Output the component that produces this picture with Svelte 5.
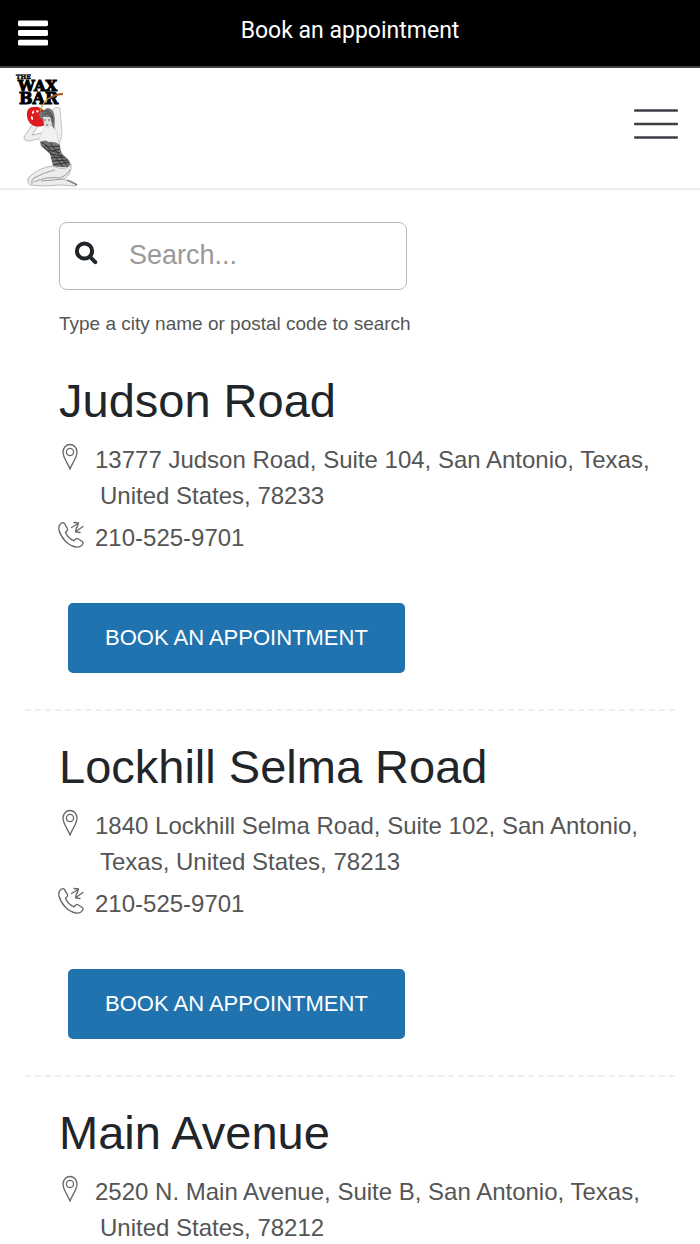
<script lang="ts">
  interface Location {
    name: string;
    address: string;
    phone: string;
  }

  const locations: Location[] = [
    { name: 'Judson Road', address: '13777 Judson Road, Suite 104, San Antonio, Texas, United States, 78233', phone: '210-525-9701' },
    { name: 'Lockhill Selma Road', address: '1840 Lockhill Selma Road, Suite 102, San Antonio, Texas, United States, 78213', phone: '210-525-9701' },
    { name: 'Main Avenue', address: '2520 N. Main Avenue, Suite B, San Antonio, Texas, United States, 78212', phone: '210-525-9701' }
  ];

  let query = $state('');
  let visible = $derived(
    locations.filter((l) => (l.name + ' ' + l.address).toLowerCase().includes(query.trim().toLowerCase()))
  );
</script>

<div class="page">
  <header class="topbar">
    <button class="icon-btn" aria-label="Open menu">
      <svg width="31" height="26" viewBox="0 0 31 26" fill="#fff">
        <rect width="31" height="6" rx="1.5" />
        <rect y="10" width="31" height="6" rx="1.5" />
        <rect y="20" width="31" height="6" rx="1.5" />
      </svg>
    </button>
    <h1>Book an appointment</h1>
  </header>

  <nav class="brandbar">
    <a href="#home" class="logo" aria-label="The Wax Bar">
      <svg width="66" height="116" viewBox="0 0 66 116">
        <g class="wordmark">
          <text x="2" y="7" font-size="6" stroke-width=".5">THE</text>
          <text x="4" y="19" font-size="15">WAX</text>
          <text x="5" y="32" font-size="16">BAR</text>
        </g>
        <!-- arms -->
        <path d="M38 38 Q42 34 46 36 L48 60 Q48 68 44 74 L37 69 L41 57 Z" fill="#eee" stroke="#bbb" stroke-width=".8" />
        <path d="M19 52 L10 65 Q10 69 15 69 L29 66 L28 61 L18 63 L24 54 Z" fill="#eee" stroke="#aaa" stroke-width=".8" />
        <!-- chest -->
        <path d="M30 55 L38 53 L43 60 L45 74 L29 73 L25 67 Z" fill="#f1f1f1" stroke="#ccc" stroke-width=".6" />
        <!-- cherry -->
        <path d="M21 35 C12 34 12 42 14 48 C17 55 25 56 31 53 C35 45 31 37 26 36 Q23 34 21 35 Z" fill="#e01b1f" />
        <path d="M18 40 l2 -2 v3 l-2 1 z M22 38 l3 1 -2 2 z M17 44 l2 1 v3 l-2 -1 z" fill="#fff" />
        <path d="M26 39 Q29 29 37 25" fill="none" stroke="#a9a83a" stroke-width="1.3" />
        <path d="M36 26 Q42 22 49 22" fill="none" stroke="#a6571f" stroke-width="2" />
        <!-- head -->
        <path d="M26 46 Q23 40 29 39 Q34 33 39 39 Q42 45 40 57 L37 52 Z" fill="#777" />
        <path d="M28 43 Q34 39 37 46 M28 40 Q35 37 39 47 M32 38 Q39 40 39 51" fill="none" stroke="#444" stroke-width=".7" />
        <path d="M29 45 L36 45 L38 52 L34 56 L30 53 Z" fill="#ddd" />
        <path d="M30 48 h2 M34 48 h2 M32 53 h2" stroke="#444" stroke-width=".8" />
        <!-- swimsuit -->
        <path d="M26 70 Q31 67 35 70 Q41 69 46 73 Q46 82 53 86 Q58 91 57 99 L54 95 Q46 96 39 94 L36 82 L27 74 Z" fill="#777" />
        <path d="M27 70 l8 5 11 -1 M31 73 l7 6 8 -2 M34 78 l12 3 M36 82 l13 2 M37 86 l14 -1 M38 89 l16 -1 M39 93 l16 -3 M36 71 l8 10 10 14 M29 74 l13 12 7 9" fill="none" stroke="#333" stroke-width="1" />
        <!-- legs -->
        <path d="M39 94 Q26 95 15 105 Q12 109 16 113 Q30 115 46 113 L62 114 L63 112 L57 109 Q51 109 50 107 Q58 102 57 92 Q53 98 44 96 Z" fill="#ececec" stroke="#aaa" stroke-width=".8" />
        <path d="M18 112 Q17 108 20 106 Q31 100 41 98 M20 110 Q33 104 46 106 Q52 104 56 98 M27 109 L50 107" fill="none" stroke="#888" stroke-width=".8" />
        <path d="M53 108 l10 5" stroke="#555" stroke-width="1" />
      </svg>
    </a>
    <button class="icon-btn" aria-label="Toggle navigation">
      <svg width="44" height="32" viewBox="0 0 44 32" stroke="#3b3f44" stroke-width="2.4" stroke-linecap="round">
        <path d="M1 2.5 H43 M1 16 H43 M1 29.5 H43" />
      </svg>
    </button>
  </nav>

  <main>
    <form class="search" onsubmit={(e) => e.preventDefault()}>
      <div class="field">
        <label for="search" aria-label="Search locations">
          <svg width="24" height="24" viewBox="0 0 24 24" fill="none" stroke="#212529">
            <circle cx="10.5" cy="10" r="7.6" stroke-width="4" />
            <path d="M16 15.8 L21.3 21.1" stroke-width="4" stroke-linecap="round" />
          </svg>
        </label>
        <input id="search" type="text" placeholder="Search..." bind:value={query} aria-describedby="hint" />
      </div>
      <p id="hint">Type a city name or postal code to search</p>
    </form>

    {#each visible as location}
      <section class="location">
        <h2>{location.name}</h2>
        <div class="row">
          <svg class="pin" width="24" height="28" viewBox="0 0 24 28" fill="none" stroke="#666" stroke-width="1.3">
            <path d="M11 27 C9 21 4 16 4 10 A7 7.5 0 0 1 18 10 C18 16 13 21 11 27 Z" />
            <circle cx="11" cy="10" r="3.6" />
          </svg>
          <address>{location.address}</address>
        </div>
        <div class="row">
          <svg class="handset" width="26" height="28" viewBox="1 0 26 28" fill="none" stroke="#666" stroke-width="1.3" stroke-linejoin="round" stroke-linecap="round">
            <path d="M3.5 3 Q0 5.5 1 10 C3 18 10 25.5 18 27 Q23 27.5 25 23.5 Q25.5 22.5 24.5 21.7 L20 18.7 Q18.8 18 17.8 19 L16 20.8 C12.5 19.5 9 16 7.5 12.3 L9.2 10.5 Q10 9.500 9.300 8.300 L6.500 3.700 Q5.300 2 3.500 3 Z" />
            <path d="M13.500 7.500 L19.500 4 M16 2.500 L20.500 3 L19 7.500 M25 6.500 L18.500 11 M18.500 7.500 L17.500 11.800 L22 12.500" />
          </svg>
          <a class="phone" href={'tel:' + location.phone}>{location.phone}</a>
        </div>
        <button class="book">BOOK AN APPOINTMENT</button>
      </section>
    {/each}
  </main>
</div>

<style>
  :global(body) {
    margin: 0;
    background: #fff;
  }
  .page {
    font-family: 'Liberation Sans', Arial, sans-serif;
    color: #555;
  }
  .icon-btn {
    display: flex;
    padding: 0;
    border: none;
    background: none;
    cursor: pointer;
  }
  .topbar {
    display: grid;
    grid-template-columns: 48px 1fr 48px;
    align-items: center;
    box-sizing: border-box;
    height: 68px;
    background: #000;
    border-bottom: 2px solid #444;
  }
  .topbar .icon-btn { padding-left: 18px; }
  h1 {
    margin: 0;
    padding-bottom: 4px;
    color: #fff;
    font: 400 23px/32px Roboto, sans-serif;
    text-align: center;
  }
  .brandbar {
    display: flex;
    align-items: center;
    justify-content: space-between;
    padding: 4px 22px 0 14px;
    border-bottom: 2px solid #eee;
  }
  .brandbar .icon-btn { padding-bottom: 12px; }
  .logo { display: flex; }
  .wordmark {
    font-family: 'DejaVu Serif', serif;
    font-weight: 700;
    stroke: #000;
  }
  main { padding: 32px 25px 0; }
  .search { padding: 0 0 9px 34px; }
  .field {
    display: flex;
    align-items: center;
    box-sizing: border-box;
    width: 100%;
    max-width: 348px;
    height: 68px;
    border: 1px solid #bbb;
    border-radius: 8px;
  }
  .field label {
    display: flex;
    padding: 0 31px 6px 14px;
  }
  .field input {
    flex: 1;
    min-width: 0;
    padding: 0 0 2px;
    border: none;
    outline: none;
    background: none;
    color: #555;
    font: 27px/32px 'Liberation Sans', Arial, sans-serif;
  }
  .field input::placeholder { color: #999; opacity: 1; }
  #hint {
    margin: 22px 0 0;
    font-size: 19px;
    line-height: 24px;
  }
  .location {
    padding: 26px 0 36px 34px;
    border-bottom: 2px dashed #eee;
  }
  h2 {
    margin: 0 0 11px;
    color: #212529;
    font-size: 47px;
    font-weight: 400;
    line-height: 60px;
  }
  .row {
    display: flex;
    gap: 10px;
    margin-bottom: 6px;
  }
  .row svg { flex: none; }
  .row .pin { margin-right: 2px; }
  .row .handset { overflow: visible; }
  address {
    padding-left: 5px;
    font-size: 24px;
    font-style: normal;
    line-height: 36px;
    text-indent: -5px;
  }
  .phone {
    color: #555;
    font-size: 24px;
    line-height: 36px;
    text-decoration: none;
  }
  .book {
    display: block;
    height: 70px;
    margin: 47px 0 0 9px;
    padding: 0 37px;
    border: none;
    border-radius: 5px;
    background: #2073ae;
    color: #fff;
    font: 22px/32px 'Liberation Sans', Arial, sans-serif;
    cursor: pointer;
  }
</style>
